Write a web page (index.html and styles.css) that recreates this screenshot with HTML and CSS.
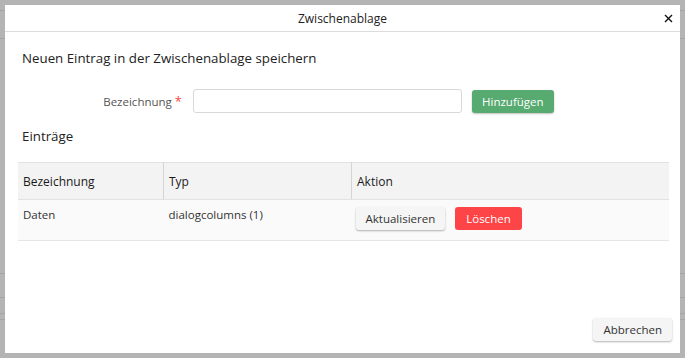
FILE: index.html
```html
<!DOCTYPE html>
<html lang="de">
<head>
    <meta charset="UTF-8">
    <title>Zwischenablage</title>
    <link rel="stylesheet" href="styles.css">
</head>
<body>
    <div class="backdrop"></div>
    <div class="dialog">
        <div class="dialog-head">
            <span class="dialog-title">Zwischenablage</span>
            <svg class="dialog-close" width="9" height="9" viewBox="0 0 9 9">
                <path d="M1 1L8 8M8 1L1 8" stroke="#111" stroke-width="1.4" fill="none"/>
            </svg>
        </div>
        <div class="dialog-body">
            <h3 class="section-title">Neuen Eintrag in der Zwischenablage speichern</h3>
            <div class="form-row">
                <label class="form-label">Bezeichnung <span class="req">*</span></label>
                <input class="form-input" type="text">
                <button class="btn btn-green">Hinzufügen</button>
            </div>
            <h3 class="section-title list-title">Einträge</h3>
            <table class="entries">
                <thead>
                    <tr>
                        <th class="col-name">Bezeichnung</th>
                        <th class="col-type">Typ</th>
                        <th>Aktion</th>
                    </tr>
                </thead>
                <tbody>
                    <tr>
                        <td>Daten</td>
                        <td>dialogcolumns (1)</td>
                        <td class="actions">
                            <button class="btn btn-light">Aktualisieren</button>
                            <button class="btn btn-red">Löschen</button>
                        </td>
                    </tr>
                </tbody>
            </table>
        </div>
        <div class="dialog-foot">
            <button class="btn btn-light">Abbrechen</button>
        </div>
    </div>
</body>
</html>
```

FILE: styles.css
```css
html, body{
    margin: 0;
    height: 100%;
}
body{
    background-color: #b4b4b4;
    padding: 5px 5px 0 5px;
    box-sizing: border-box;
    font-family: "Open Sans", "Noto Sans", sans-serif;
    font-size: 11.5px;
    color: #333;
    overflow: hidden;
}
.backdrop{
    position: absolute;
    left: 0;
    top: 0;
    width: 100%;
    height: 100%;
    background:
        linear-gradient(#a4a4a4, #a4a4a4) 0 10px / 100% 1px no-repeat,
        linear-gradient(#a4a4a4, #a4a4a4) 0 38px / 100% 1px no-repeat,
        linear-gradient(#a4a4a4, #a4a4a4) 0 273px / 100% 1px no-repeat,
        linear-gradient(#a4a4a4, #a4a4a4) 0 297px / 100% 1px no-repeat,
        linear-gradient(#a4a4a4, #a4a4a4) 0 313px / 100% 1px no-repeat,
        linear-gradient(#a4a4a4, #a4a4a4) 0 319px / 100% 1px no-repeat;
}
.dialog{
    position: relative;
    background-color: #fff;
    height: 348px;
    display: flex;
    flex-direction: column;
}
.dialog-head{
    height: 26px;
    border-bottom: 1px solid #dcdcdc;
    display: flex;
    align-items: center;
    justify-content: center;
    position: relative;
}
.dialog-title{
    font-size: 12px;
    color: #222;
}
.dialog-close{
    position: absolute;
    right: 7px;
    top: 9px;
}
.dialog-body{
    flex: 1;
    padding: 0 11px 0 13px;
}
.section-title{
    margin: 0;
    font-size: 13.3px;
    font-weight: 400;
    color: #222;
    padding-left: 4px;
}
.section-title:first-child{
    margin-top: 17px;
}
.form-row{
    display: flex;
    align-items: center;
    margin-top: 22px;
}
.form-label{
    width: 164px;
    text-align: right;
    color: #555;
    flex-shrink: 0;
}
.req{
    color: #f44;
    font-size: 13px;
}
.form-input{
    margin-left: 11px;
    width: 269px;
    height: 24px;
    box-sizing: border-box;
    border: 1px solid #d8d8d8;
    border-radius: 3px;
    outline: none;
}
.btn{
    font-family: "Open Sans", "Noto Sans", sans-serif;
    font-size: 11.5px;
    border: none;
    border-radius: 3px;
    height: 23px;
    padding: 0 10px;
    cursor: pointer;
}
.btn-green{
    margin-left: 10px;
    background-color: #57aa70;
    color: #fff;
    box-shadow: 0 1px 2px rgba(0, 0, 0, 0.25);
}
.btn-red{
    background-color: #fd4447;
    color: #fff;
    padding: 0 11px;
    margin-left: 7px;
}
.btn-light{
    background-color: #f5f5f5;
    color: #333;
    box-shadow: 0 1px 2px rgba(0, 0, 0, 0.3);
}
.list-title{
    margin-top: 14px;
}
.entries{
    width: 100%;
    margin-top: 17px;
    border-collapse: collapse;
}
.entries th{
    text-align: left;
    font-size: 12px;
    font-weight: 400;
    color: #1a1a1a;
    background-color: #f3f3f3;
    height: 36px;
    padding: 0 5px;
    border-top: 1px solid #e2e2e2;
    border-bottom: 1px solid #e2e2e2;
    border-right: 1px solid #d4d4d4;
}
.entries th:last-child{
    border-right: none;
}
.col-name{
    width: 135px;
}
.col-type{
    width: 177px;
}
.entries td{
    background-color: #fafafa;
    height: 41px;
    padding: 0 5px;
    border-bottom: 1px solid #e6e6e6;
    vertical-align: top;
    padding-top: 7px;
    box-sizing: border-box;
}
.entries td.actions{
    padding-top: 7px;
    padding-left: 4px;
}
.dialog-foot{
    display: flex;
    justify-content: flex-end;
    padding: 0 8px 12px 0;
}
```
